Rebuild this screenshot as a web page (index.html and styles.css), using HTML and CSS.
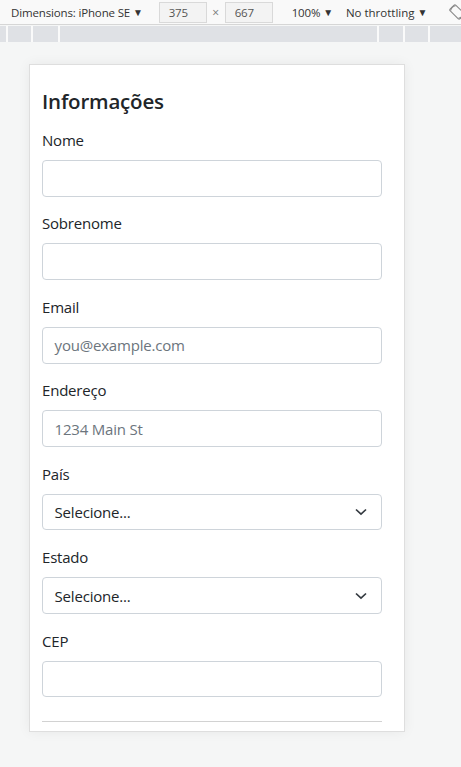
FILE: index.html
```html
<!DOCTYPE html>
<html lang="pt-BR">
<head>
<meta charset="utf-8">
<title>Informações</title>
<link rel="stylesheet" href="styles.css">
</head>
<body>
<div class="toolbar">
  <span class="tb-item tb-dim">Dimensions: iPhone SE <span class="caret">▼</span></span>
  <span class="tb-box">375</span>
  <span class="tb-x">×</span>
  <span class="tb-box">667</span>
  <span class="tb-item tb-zoom">100% <span class="caret">▼</span></span>
  <span class="tb-item tb-thr">No throttling <span class="caret">▼</span></span>
  <svg class="tb-rotate" width="16" height="16" viewBox="0 0 16 16"><g fill="none" stroke="#8a8a8a" stroke-width="1.1"><rect x="4" y="1" width="8" height="14" rx="1.5" transform="rotate(-45 8 8)"/><path d="M1.6 6.5A6.6 6.6 0 0 1 6.5 1.6M14.4 9.5A6.6 6.6 0 0 1 9.5 14.4"/></g></svg>
</div>
<div class="ruler">
  <span class="seg s1"></span><span class="seg s2"></span><span class="seg s3"></span><span class="seg s4"></span><span class="seg s5"></span><span class="seg s6"></span><span class="seg s7"></span>
</div>
<div class="stage">
  <div class="device">
    <div class="content">
      <h4 class="title">Informações</h4>
      <div class="group">
        <label class="label">Nome</label>
        <div class="field"></div>
      </div>
      <div class="group">
        <label class="label">Sobrenome</label>
        <div class="field"></div>
      </div>
      <div class="group">
        <label class="label">Email</label>
        <div class="field"><span class="ph">you@example.com</span></div>
      </div>
      <div class="group">
        <label class="label">Endereço</label>
        <div class="field"><span class="ph">1234 Main St</span></div>
      </div>
      <div class="group">
        <label class="label">País</label>
        <div class="field select"><span class="val">Selecione...</span>
          <svg class="chev" width="12" height="8" viewBox="0 0 12 8"><path d="M1 1.5 6 6.2 11 1.5" fill="none" stroke="#343a40" stroke-width="1.7"/></svg>
        </div>
      </div>
      <div class="group">
        <label class="label">Estado</label>
        <div class="field select"><span class="val">Selecione...</span>
          <svg class="chev" width="12" height="8" viewBox="0 0 12 8"><path d="M1 1.5 6 6.2 11 1.5" fill="none" stroke="#343a40" stroke-width="1.7"/></svg>
        </div>
      </div>
      <div class="group">
        <label class="label">CEP</label>
        <div class="field"></div>
      </div>
      <hr class="rule">
    </div>
  </div>
</div>
</body>
</html>
```
FILE: styles.css
```css
* { box-sizing: border-box; }
html, body { margin: 0; padding: 0; }
body {
  width: 461px;
  height: 767px;
  overflow: hidden;
  background: #f5f6f6;
  font-family: "Open Sans", "Noto Sans", sans-serif;
  color: #212529;
}
.toolbar {
  height: 25px;
  background: #f9f9f9;
  border-bottom: 1px solid #d6d6d6;
  display: flex;
  align-items: center;
  font-size: 11.5px;
  letter-spacing: -0.15px;
  color: #333;
  padding-left: 11px;
  white-space: nowrap;
  overflow: hidden;
}
.toolbar > * { flex-shrink: 0; }
.caret { font-size: 10px; position: relative; top: -1px; }
.tb-dim { margin-right: 16px; }
.tb-box {
  width: 48px;
  height: 21px;
  border: 1px solid #d9d9d9;
  background: #f3f3f3;
  display: flex;
  align-items: center;
  padding-left: 9px;
  color: #555;
}
.tb-x { width: 18px; text-align: center; color: #777; font-size: 12px; }
.tb-zoom { margin-left: 19px; margin-right: 13px; }
.tb-thr { letter-spacing: 0; }
.tb-rotate { margin-left: 22px; }
.ruler {
  margin-top: 1px;
  height: 16px;
  display: flex;
  background: #fafafa;
}
.seg { background: #dfe1e5; height: 16px; margin-right: 2px; }
.s1 { width: 6px; }
.s2 { width: 23px; }
.s3 { width: 25px; }
.s4 { width: 317px; }
.s5 { width: 24px; }
.s6 { width: 23px; }
.s7 { flex: 1; margin-right: 0; }
.stage {
  padding-top: 22px;
  padding-left: 29px;
}
.device {
  width: 376px;
  height: 668px;
  background: #fff;
  border: 1px solid #dedede;
  box-shadow: 0 0 12px rgba(0,0,0,0.06);
  overflow: hidden;
}
.content {
  padding: 23px 0 0 12px;
  width: 352px;
}
.title {
  margin: 0 0 15px 0;
  font-size: 20.5px;
  line-height: 26px;
  font-weight: 600;
  letter-spacing: -0.2px;
}
.group { margin-bottom: 15.9px; }
.label {
  display: block;
  font-size: 15px;
  line-height: 23.2px;
  margin-bottom: 7.7px;
  letter-spacing: -0.2px;
}
.field {
  height: 36.7px;
  width: 340px;
  border: 1px solid #ced4da;
  border-radius: 4px;
  background: #fff;
  display: flex;
  align-items: center;
  padding-left: 11.6px;
  font-size: 15px;
  letter-spacing: -0.2px;
}
.ph { color: #6c757d; }
.select { justify-content: space-between; padding-right: 14px; }
.val { color: #212529; }
.rule {
  margin: 24px 0 0 0;
  width: 340px;
  border: 0;
  border-top: 1px solid #d2d2d2;
}
```
